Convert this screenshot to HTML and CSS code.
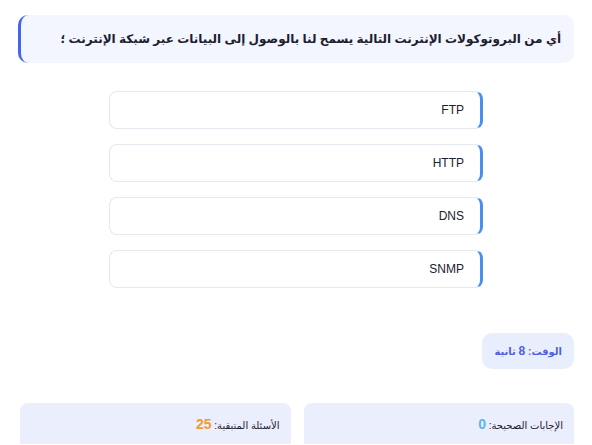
FILE: index.html
```html
<!DOCTYPE html>
<html lang="ar" dir="rtl">
<head>
    <meta charset="UTF-8">
    <meta name="viewport" content="width=device-width, initial-scale=1.0">
    <title>اختبار الشبكات</title>
    <link rel="stylesheet" href="styles.css">
</head>
<body>
    <div class="quiz">
        <div class="question">أي من البروتوكولات الإنترنت التالية يسمح لنا بالوصول إلى البيانات عبر شبكة الإنترنت ؛</div>

        <div class="options">
            <div class="option">FTP</div>
            <div class="option">HTTP</div>
            <div class="option">DNS</div>
            <div class="option">SNMP</div>
        </div>

        <div class="timer-row">
            <div class="timer">الوقت: <b>8</b> ثانية</div>
        </div>

        <div class="stats">
            <div class="stat">الإجابات الصحيحة: <span class="correct">0</span></div>
            <div class="stat">الأسئلة المتبقية: <span class="left">25</span></div>
        </div>
    </div>
</body>
</html>
```

FILE: styles.css
```css
body {
    margin: 0;
    font-family: "Liberation Sans", Arial, "DejaVu Sans", sans-serif;
    background-color: #ffffff;
    color: #1f2433;
    overflow: hidden;
}
.quiz {
    padding: 15px 18px 0 18px;
}
.question {
    background-color: #f3f6fe;
    border-left: 3px solid #4466ee;
    border-radius: 10px;
    height: 48px;
    line-height: 48px;
    padding: 0 13px;
    font-size: 12px;
    font-weight: bold;
    color: #1c2030;
    white-space: nowrap;
}
.options {
    width: 374px;
    margin: 28px auto 0 auto;
}
.option {
    height: 36px;
    line-height: 36px;
    border: 1px solid #e5e8ee;
    border-right: 3px solid #4a8ff0;
    border-radius: 8px;
    padding: 0 16px;
    margin-bottom: 15px;
    font-size: 12px;
    color: #1c2030;
    direction: ltr;
    text-align: right;
}
.timer-row {
    display: flex;
    margin-top: 45px;
}
.timer {
    background-color: #e9eefd;
    color: #4f5fe0;
    border-radius: 10px;
    height: 36px;
    line-height: 36px;
    padding: 0 12px;
    font-size: 10px;
    font-weight: bold;
}
.timer b {
    font-size: 12px;
}
.stats {
    display: grid;
    grid-template-columns: 1fr 1fr;
    gap: 13px;
    margin-top: 34px;
    padding: 0 0 0 2px;
}
.stat {
    background-color: #ebeefc;
    border-radius: 8px 8px 0 0;
    height: 31px;
    padding: 10px 11px 0 11px;
    line-height: 22px;
    font-size: 10px;
    color: #1c2030;
}
.stat span {
    font-size: 14px;
    font-weight: bold;
}
.correct {
    color: #5cb6f2;
}
.left {
    color: #f29a2e;
}
```
